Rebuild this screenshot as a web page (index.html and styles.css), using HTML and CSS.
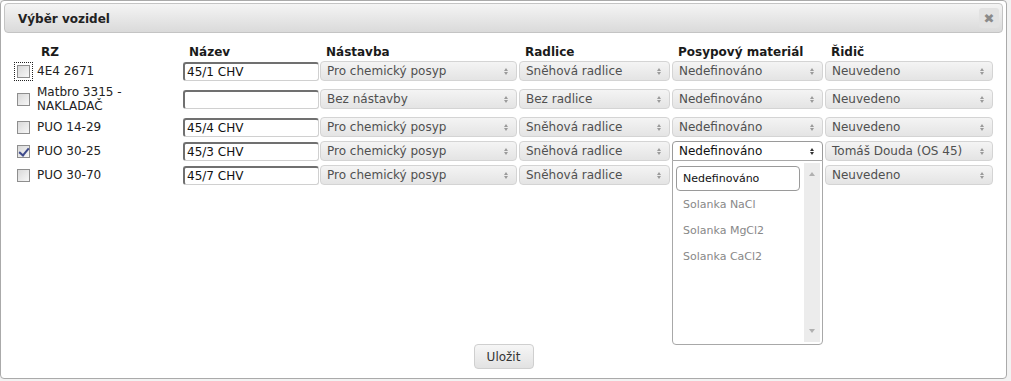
FILE: index.html
```html
<!DOCTYPE html>
<html lang="cs">
<head>
  <meta charset="UTF-8">
  <title>Výběr vozidel</title>
  <link rel="stylesheet" href="styles.css">
</head>
<body>
  <div class="dialog">
    <div class="titlebar">
      <span class="title">Výběr vozidel</span>
      <span class="close-btn">✖</span>
    </div>

    <div class="dialog-body">
      <div class="vehicle-grid">
        <!-- header -->
        <div class="th th-rz">RZ</div>
        <div class="th">Název</div>
        <div class="th">Nástavba</div>
        <div class="th">Radlice</div>
        <div class="th">Posypový materiál</div>
        <div class="th">Řidič</div>

        <!-- 4E4 2671 -->
        <div class="td rz"><span class="check focused"></span><span class="rz-label">4E4 2671</span></div>
        <div class="td"><input class="name-input" type="text" value="45/1 CHV"></div>
        <div class="td"><div class="select">Pro chemický posyp<i class="arrows"></i></div></div>
        <div class="td"><div class="select">Sněhová radlice<i class="arrows"></i></div></div>
        <div class="td"><div class="select">Nedefinováno<i class="arrows"></i></div></div>
        <div class="td"><div class="select">Neuvedeno<i class="arrows"></i></div></div>

        <!-- Matbro -->
        <div class="td rz"><span class="check"></span><span class="rz-label">Matbro 3315 - NAKLADAČ</span></div>
        <div class="td"><input class="name-input" type="text" value=""></div>
        <div class="td"><div class="select">Bez nástavby<i class="arrows"></i></div></div>
        <div class="td"><div class="select">Bez radlice<i class="arrows"></i></div></div>
        <div class="td"><div class="select">Nedefinováno<i class="arrows"></i></div></div>
        <div class="td"><div class="select">Neuvedeno<i class="arrows"></i></div></div>

        <!-- PUO 14-29 -->
        <div class="td rz"><span class="check"></span><span class="rz-label">PUO 14-29</span></div>
        <div class="td"><input class="name-input" type="text" value="45/4 CHV"></div>
        <div class="td"><div class="select">Pro chemický posyp<i class="arrows"></i></div></div>
        <div class="td"><div class="select">Sněhová radlice<i class="arrows"></i></div></div>
        <div class="td"><div class="select">Nedefinováno<i class="arrows"></i></div></div>
        <div class="td"><div class="select">Neuvedeno<i class="arrows"></i></div></div>

        <!-- PUO 30-25 -->
        <div class="td rz"><span class="check checked"></span><span class="rz-label">PUO 30-25</span></div>
        <div class="td"><input class="name-input" type="text" value="45/3 CHV"></div>
        <div class="td"><div class="select">Pro chemický posyp<i class="arrows"></i></div></div>
        <div class="td"><div class="select">Sněhová radlice<i class="arrows"></i></div></div>
        <div class="td">
          <div class="select open">Nedefinováno<i class="arrows"></i>
            <div class="dropdown">
              <ul class="options">
                <li class="selected">Nedefinováno</li>
                <li>Solanka NaCl</li>
                <li>Solanka MgCl2</li>
                <li>Solanka CaCl2</li>
              </ul>
              <div class="scrollbar">
                <span class="scroll-up"></span>
                <span class="scroll-down"></span>
              </div>
            </div>
          </div>
        </div>
        <div class="td"><div class="select">Tomáš Douda (OS 45)<i class="arrows"></i></div></div>

        <!-- PUO 30-70 (material select is hidden under the open list) -->
        <div class="td rz"><span class="check"></span><span class="rz-label">PUO 30-70</span></div>
        <div class="td"><input class="name-input" type="text" value="45/7 CHV"></div>
        <div class="td"><div class="select">Pro chemický posyp<i class="arrows"></i></div></div>
        <div class="td"><div class="select">Sněhová radlice<i class="arrows"></i></div></div>
        <div class="td"><div class="select"></div></div>
        <div class="td"><div class="select">Neuvedeno<i class="arrows"></i></div></div>
      </div>
    </div>

    <div class="dialog-footer">
      <button class="save-btn">Uložit</button>
    </div>
  </div>
</body>
</html>
```

FILE: styles.css
```css
* {
  box-sizing: border-box;
  margin: 0;
  padding: 0;
}

body {
  font-family: 'DejaVu Sans', Verdana, sans-serif;
  font-size: 12px;
  color: #222;
  background-color: #f2f2f2;
  width: 1011px;
  height: 381px;
  overflow: hidden;
}

.dialog {
  width: 1007px;
  height: 379px;
  background-color: white;
  border: 1px solid #aaa;
  border-radius: 4px;
  padding: 2px 3px 0;
  display: flex;
  flex-direction: column;
}

.titlebar {
  height: 30px;
  border: 1px solid #c4c4c4;
  border-radius: 4px;
  background: linear-gradient(#f4f4f4, #dadada);
  display: flex;
  align-items: center;
  justify-content: space-between;
  padding: 0 3px 0 13px;
}

.title {
  font-weight: bold;
  color: #222;
  position: relative;
  top: 1px;
}

.close-btn {
  width: 20px;
  height: 20px;
  border-radius: 3px;
  background-color: #e2e2e2;
  color: #8a8a8a;
  font-size: 13px;
  display: flex;
  align-items: center;
  justify-content: center;
}

.dialog-body {
  flex: 1;
  padding: 8px 0 0 11px;
}

.vehicle-grid {
  display: grid;
  grid-template-columns: 166px 135px 197px 151px 151px 168px;
  column-gap: 2px;
  align-items: center;
}

.th {
  font-weight: bold;
  color: #1a1a1a;
  line-height: 14px;
  padding: 4px 0 0 6px;
}

.th-rz {
  padding-left: 26px;
}

.td {
  padding: 2px 0;
}

.td.rz {
  display: flex;
  align-items: center;
  padding-left: 2px;
}

.rz-label {
  margin-left: 7px;
  line-height: 14px;
  color: #222;
}

.check {
  flex: none;
  width: 13px;
  height: 13px;
  border: 1px solid #8e8e8e;
  background: linear-gradient(135deg, #d9d9d9, #f7f7f7);
  position: relative;
}

.check.focused {
  outline: 1px dotted #222;
  outline-offset: 2px;
}

.check.checked::after {
  content: "";
  position: absolute;
  left: 3px;
  top: 0px;
  width: 4px;
  height: 8px;
  border-right: 2px solid #3f4b8c;
  border-bottom: 2px solid #3f4b8c;
  transform: rotate(40deg);
}

.name-input {
  display: block;
  width: 136px;
  height: 19px;
  font-family: inherit;
  font-size: 12px;
  color: #111;
  padding: 0 2px;
  border: 1px solid #d0d0d0;
  border-top: 2px solid #707070;
  border-left: 2px solid #707070;
  border-radius: 3px;
  outline: none;
}

.select {
  position: relative;
  height: 20px;
  line-height: 18px;
  padding-left: 6px;
  border: 1px solid #d4d4d4;
  border-radius: 4px;
  background: linear-gradient(#f4f4f4, #e4e4e4);
  color: #505050;
  white-space: nowrap;
}

.arrows {
  position: absolute;
  right: 7px;
  top: 6px;
  width: 5px;
  height: 7px;
}

.arrows::before,
.arrows::after {
  content: "";
  position: absolute;
  left: 0;
  border-left: 2.5px solid transparent;
  border-right: 2.5px solid transparent;
}

.arrows::before {
  top: 0;
  border-bottom: 3px solid #9a9a9a;
}

.arrows::after {
  bottom: 0;
  border-top: 3px solid #9a9a9a;
}

.select.open {
  background: white;
  border-color: #9a9a9a;
  color: #111;
  border-radius: 4px 4px 0 0;
}

.select.open .arrows::before {
  border-bottom-color: #333;
}

.select.open .arrows::after {
  border-top-color: #333;
}

.dropdown {
  position: absolute;
  top: 18px;
  left: -1px;
  width: 151px;
  height: 185px;
  background-color: white;
  border: 1px solid #a8a8a8;
  border-radius: 0 0 4px 4px;
  z-index: 5;
  display: flex;
  padding: 2px 2px 2px 0;
}

.options {
  list-style: none;
  flex: 1;
  padding: 3px 4px 0 3px;
  font-size: 11px;
  line-height: 24px;
  color: #888;
}

.options li {
  height: 26px;
  padding-left: 6px;
  border: 1px solid transparent;
}

.options li.selected {
  height: 25px;
  margin-bottom: 1px;
  border-color: #9a9a9a;
  border-radius: 4px;
  color: #111;
}

.scrollbar {
  width: 16px;
  background-color: #ececec;
  position: relative;
}

.scroll-up,
.scroll-down {
  position: absolute;
  left: 5px;
  border-left: 3.5px solid transparent;
  border-right: 3.5px solid transparent;
}

.scroll-up {
  top: 9px;
  border-bottom: 4px solid #b0b0b0;
}

.scroll-down {
  bottom: 9px;
  border-top: 4px solid #b0b0b0;
}

.dialog-footer {
  display: flex;
  justify-content: center;
  padding-bottom: 9px;
}

.save-btn {
  width: 60px;
  height: 25px;
  font-family: inherit;
  font-size: 12px;
  color: #333;
  border: 1px solid #cfcfcf;
  border-radius: 4px;
  background: linear-gradient(#f6f6f6, #e2e2e2);
}
```
